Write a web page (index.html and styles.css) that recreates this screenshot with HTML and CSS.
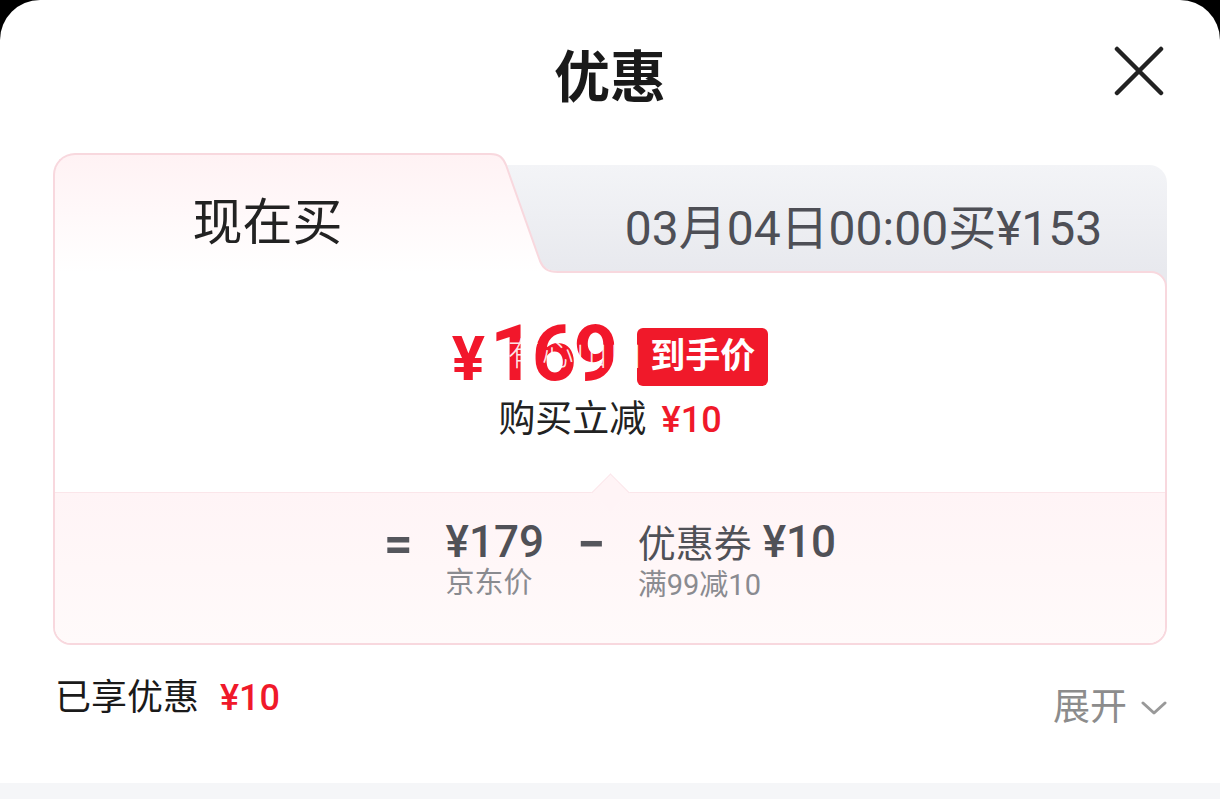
FILE: index.html
```html
<!DOCTYPE html>
<html lang="zh-CN">
<head>
    <meta charset="UTF-8">
    <meta name="viewport" content="width=device-width, initial-scale=1.0">
    <title>优惠</title>
    <link rel="stylesheet" href="styles.css">
</head>
<body>

<div class="sheet">
    <header class="header">
        <h1 class="title">优惠</h1>
        <button class="close" aria-label="关闭">
            <svg width="50" height="50" viewBox="0 0 50 50">
                <path d="M3 3 L47 47 M47 3 L3 47" stroke="#222" stroke-width="4.5" stroke-linecap="round" fill="none"/>
            </svg>
        </button>
    </header>

    <!-- Price card -->
    <section class="card">
        <div class="tabs">
            <div class="tab-now">现在买</div>
            <svg class="tab-slant" width="70" height="120" viewBox="0 0 70 120">
                <defs>
                    <linearGradient id="nowBg" x1="0" y1="0" x2="0" y2="1">
                        <stop offset="0" stop-color="#fff2f4"/>
                        <stop offset="1" stop-color="#ffffff"/>
                    </linearGradient>
                    <linearGradient id="laterBg" x1="0" y1="0" x2="0" y2="1">
                        <stop offset="0" stop-color="#f3f4f7"/>
                        <stop offset="1" stop-color="#e8e9ee"/>
                    </linearGradient>
                </defs>
                <path d="M0 0 C10 0 13 4 16 11 L50 107 C53 114 57 118 68 118 L70 118 L70 120 L0 120 Z" fill="url(#nowBg)"/>
                <path d="M16 12 L70 12 L70 118 L68 118 C57 118 53 114 50 107 Z" fill="url(#laterBg)"/>
                <path d="M0 1 C10 1 13 5 16 12 L50 108 C53 115 57 119 68 119 L70 119" stroke="#f8d8de" stroke-width="2" fill="none"/>
            </svg>
            <div class="tab-later">03月04日00:00买¥153</div>
        </div>

        <div class="card-body">
            <div class="deal">
                <div class="deal-price">
                    <span class="price"><span class="price-sign">¥</span>169</span>
                    <span class="badge">到手价</span>
                    <span class="watermark">有心山山</span>
                </div>
                <div class="deal-note">购买立减 <em>¥10</em></div>
            </div>

            <div class="breakdown">
                <span class="op">=</span>
                <div class="term">
                    <div class="term-value">¥179</div>
                    <div class="term-label">京东价</div>
                </div>
                <span class="op">−</span>
                <div class="term">
                    <div class="term-value"><span class="term-name">优惠券</span> ¥10</div>
                    <div class="term-label">满99减10</div>
                </div>
            </div>
        </div>
    </section>

    <div class="summary">
        <div class="summary-total">已享优惠 <em>¥10</em></div>
        <div class="summary-toggle">
            展开
            <svg width="26" height="16" viewBox="0 0 26 16">
                <polyline points="2,3 13,13 24,3" stroke="#999" stroke-width="3" fill="none" stroke-linecap="round" stroke-linejoin="round"/>
            </svg>
        </div>
    </div>
</div>
<div class="strip"></div>

</body>
</html>
```

FILE: styles.css
```css
body {
    margin: 0;
    background: #000;
    font-family: Roboto, "Noto Sans CJK SC", sans-serif;
    color: #222;
}

.sheet {
    height: 783px;
    background: #fff;
    border-radius: 40px 40px 0 0;
}

.strip {
    height: 16px;
    background: #f5f6f8;
}

.header {
    position: relative;
    height: 144px;
    display: flex;
    justify-content: center;
    align-items: center;
}

.title {
    margin: 0;
    font-size: 56px;
    font-weight: 700;
    color: #1a1a1a;
}

.close {
    position: absolute;
    right: 56px;
    top: 46px;
    padding: 0;
    border: none;
    background: none;
    line-height: 0;
}

/* card */
.card {
    margin: 9px 53px 0;
    isolation: isolate;
}

.tabs {
    display: flex;
    height: 120px;
    margin-bottom: -2px;
}

.tab-now {
    position: relative;
    z-index: 2;
    box-sizing: border-box;
    width: 437px;
    height: 120px;
    border: 2px solid #f8d8de;
    border-right: none;
    border-bottom: none;
    border-radius: 22px 0 0 0;
    background: linear-gradient(180deg, #fff2f4 0%, #fff 100%);
    display: flex;
    justify-content: center;
    align-items: center;
    padding: 8px 10px 0 0;
    font-size: 50px;
    color: #222;
}

.tab-slant {
    position: relative;
    z-index: 2;
    flex-shrink: 0;
}

.tab-later {
    position: relative;
    z-index: 0;
    flex: 1;
    box-sizing: border-box;
    height: 124px;
    margin-top: 12px;
    border-radius: 0 18px 0 0;
    background: linear-gradient(180deg, #f3f4f7 0%, #e8e9ee 85%);
    padding: 35px 0 0 0;
    text-align: center;
    font-size: 48px;
    line-height: 58px;
    color: #4e4f56;
}

.card-body {
    position: relative;
    z-index: 1;
    border: 2px solid #f8d8de;
    border-radius: 0 16px 18px 18px;
    background: #fff;
    overflow: hidden;
}

.deal {
    display: flex;
    flex-direction: column;
    align-items: center;
    padding: 43px 0 47px;
}

.deal-price {
    position: relative;
    display: flex;
    align-items: center;
    gap: 22px;
}

.price {
    font-size: 78px;
    line-height: 76px;
    font-weight: 700;
    letter-spacing: -3px;
    color: #f2172b;
}

.price-sign {
    font-size: 62px;
    margin-right: 8px;
}

.badge {
    height: 58px;
    padding: 0 13px;
    border-radius: 6px;
    background: #f0192a;
    color: #fff;
    font-size: 35px;
    font-weight: 700;
    line-height: 58px;
}

.watermark {
    position: absolute;
    left: 56px;
    top: 12px;
    font-size: 32px;
    font-weight: 300;
    letter-spacing: 2px;
    color: rgba(255, 255, 255, 0.9);
}

.deal-note {
    margin-top: -2px;
    font-size: 37px;
    line-height: 50px;
    color: #222;
}

.deal-note em {
    font-style: normal;
    font-size: 36px;
    font-weight: 500;
    color: #f0192a;
    margin-left: 6px;
}

.breakdown {
    position: relative;
    display: flex;
    justify-content: center;
    gap: 33px;
    padding: 26px 0 40px;
    border-top: 1px solid #fbe6ea;
    background: linear-gradient(180deg, #fff4f6 0%, #fffafa 100%);
}

.breakdown::before {
    content: "";
    position: absolute;
    top: -14px;
    left: calc(50% - 13px);
    width: 26px;
    height: 26px;
    background: #fff4f6;
    border-top: 1px solid #fbe6ea;
    border-left: 1px solid #fbe6ea;
    transform: rotate(45deg);
}

.op {
    font-size: 50px;
    line-height: 50px;
    font-weight: 700;
    color: #55565c;
}

.term-value {
    font-size: 44px;
    line-height: 46px;
    font-weight: 500;
    color: #505157;
}

.term-name {
    font-size: 38px;
    font-weight: 400;
}

.term-label {
    font-size: 29px;
    line-height: 36px;
    color: #8a8b90;
}

/* summary row */
.summary {
    display: flex;
    justify-content: space-between;
    align-items: flex-start;
    margin-top: 29px;
    padding: 0 53px 0 55px;
}

.summary-total {
    font-size: 36px;
    line-height: 48px;
    color: #1a1a1a;
}

.summary-total em {
    font-style: normal;
    font-size: 36px;
    font-weight: 500;
    color: #f0192a;
    margin-left: 12px;
}

.summary-toggle {
    display: flex;
    align-items: center;
    gap: 14px;
    padding-top: 10px;
    font-size: 37px;
    line-height: 48px;
    color: #8c8c8c;
}
```
